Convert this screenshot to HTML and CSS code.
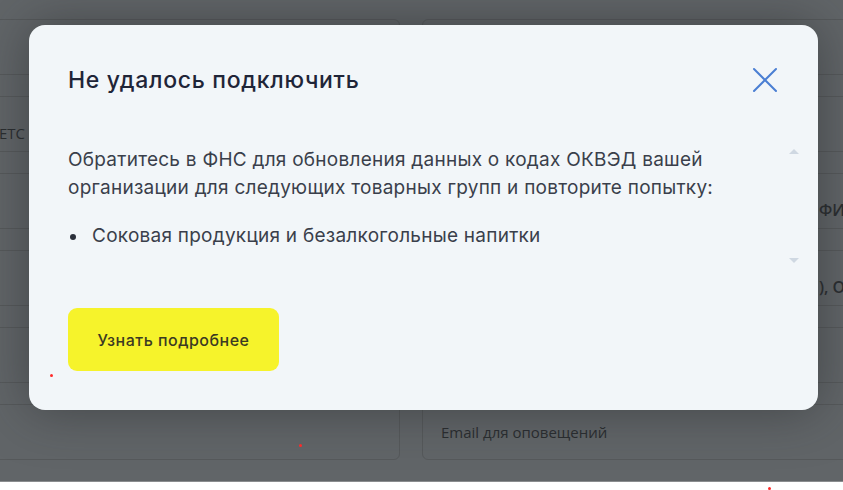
FILE: index.html
```html
<!DOCTYPE html>
<html lang="ru">
  <head>
    <meta charset="UTF-8" />
    <meta name="viewport" content="width=device-width, initial-scale=1.0" />
    <title>Не удалось подключить</title>
    <link rel="stylesheet" href="styles.css">
  </head>
  <body>
    <div class="page">
      <div class="form-back">
        <div class="field"></div>
        <div class="field"></div>
        <div class="field"><span class="field-text left">ЕТС</span></div>
        <div class="field"></div>
        <div class="field"></div>
        <div class="field"><span class="field-text lower">ФИО</span></div>
        <div class="field"></div>
        <div class="field"><span class="field-text lower">), ООО</span></div>
        <div class="field"></div>
        <div class="field"></div>
        <div class="field"></div>
        <div class="field"><span class="field-text email">Email для оповещений</span></div>
      </div>

      <div class="modal">
        <div class="modal-header">
          <div class="modal-title">Не удалось подключить</div>
          <button type="button" class="close" aria-label="Закрыть">
            <svg width="26" height="26" viewBox="0 0 26 26">
              <path d="M2 2 L24 24 M24 2 L2 24" stroke="#4b7fd3" stroke-width="2" fill="none" stroke-linecap="round" />
            </svg>
          </button>
        </div>

        <div class="modal-body">
          <div class="modal-text">
            <p>
              Обратитесь в ФНС для обновления данных о кодах ОКВЭД вашей
              организации для следующих товарных групп и повторите попытку:
            </p>
            <ul>
              <li>Соковая продукция и безалкогольные напитки</li>
            </ul>
          </div>
          <div class="scrollbar">
            <span class="arrow up"></span>
            <span class="arrow down"></span>
          </div>
        </div>

        <div class="modal-footer">
          <button type="button" class="button">Узнать подробнее</button>
        </div>
      </div>

      <span class="dot dot-1"></span>
      <span class="dot dot-2"></span>
    </div>
    <span class="dot dot-3"></span>
  </body>
</html>
```

FILE: styles.css
```css
body {
  margin: 0;
  padding: 0;
  background-color: #ffffff;
  font-family: "Inter", "Roboto", sans-serif;
  width: 843px;
  height: 490px;
  overflow: hidden;
  position: relative;
}

.page {
  position: relative;
  height: 481px;
  background-color: #616568;
  border-bottom: 1px solid #8a8d8f;
  overflow: hidden;
}

/* form under the overlay */
.form-back {
  display: grid;
  grid-template-columns: 410px 440px;
  column-gap: 22px;
  row-gap: 21px;
  margin-left: -10px;
  padding-top: 19px;
}

.field {
  height: 54px;
  border: 1px solid #56595b;
  border-radius: 6px;
  display: flex;
  align-items: center;
  white-space: nowrap;
}

.field-text {
  font-family: "Open Sans", sans-serif;
  font-size: 15px;
  color: #2a2d30;
  padding-left: 18px;
}

.field-text.left {
  padding-left: 8px;
  padding-top: 18px;
}

/* labels that only peek out at the right of the modal */
.field-text.lower {
  padding-left: 396px;
  padding-top: 18px;
  font-size: 16px;
  font-weight: 600;
}

.modal {
  position: absolute;
  left: 29px;
  top: 25px;
  width: 789px;
  height: 385px;
  box-sizing: border-box;
  padding: 40px 0 0 39px;
  background-color: #f2f6f9;
  border-radius: 16px;
  box-shadow: 0 0 50px rgba(35, 37, 39, 0.5);
  display: flex;
  flex-direction: column;
}

.modal-header {
  display: flex;
  justify-content: space-between;
  align-items: flex-start;
  padding-right: 40px;
}

.modal-title {
  font-size: 23px;
  font-weight: 500;
  letter-spacing: 0.7px;
  line-height: 30px;
  color: #1f2538;
}

.close {
  background: none;
  border: none;
  padding: 0;
  margin-top: 2px;
  cursor: pointer;
}

.modal-body {
  display: flex;
  justify-content: space-between;
  margin-top: 50px;
  height: 117px;
}

.modal-text {
  font-size: 19px;
  letter-spacing: 0.25px;
  line-height: 28px;
  color: #3a3f4b;
}

.modal-text p {
  margin: 0;
}

.modal-text ul {
  list-style: none;
  margin: 20px 0 0;
  padding: 0;
}

.modal-text li {
  position: relative;
  padding-left: 24px;
}

.modal-text li::before {
  content: "";
  position: absolute;
  left: 2px;
  top: 12px;
  width: 6px;
  height: 6px;
  border-radius: 50%;
  background-color: #2b303b;
}

.scrollbar {
  width: 20px;
  margin-right: 18px;
  display: flex;
  flex-direction: column;
  justify-content: space-between;
  align-items: center;
  padding-top: 3px;
}

.arrow {
  width: 0;
  height: 0;
  border-left: 5px solid transparent;
  border-right: 5px solid transparent;
}

.arrow.up {
  border-bottom: 5px solid #cfd8e2;
}

.arrow.down {
  border-top: 5px solid #cfd8e2;
}

.modal-footer {
  margin-top: 45px;
}

.button {
  width: 211px;
  height: 63px;
  background-color: #f6f32b;
  border: none;
  border-radius: 9px;
  font-family: "Inter", "Roboto", sans-serif;
  font-size: 16px;
  font-weight: 500;
  letter-spacing: 0.5px;
  color: #3b3a22;
  cursor: pointer;
}

.dot {
  position: absolute;
  width: 3px;
  height: 3px;
  border-radius: 50%;
  background-color: #ff2a2a;
}

.dot-1 {
  left: 50px;
  top: 374px;
}

.dot-2 {
  left: 299px;
  top: 444px;
}

.dot-3 {
  left: 768px;
  top: 487px;
}
```
